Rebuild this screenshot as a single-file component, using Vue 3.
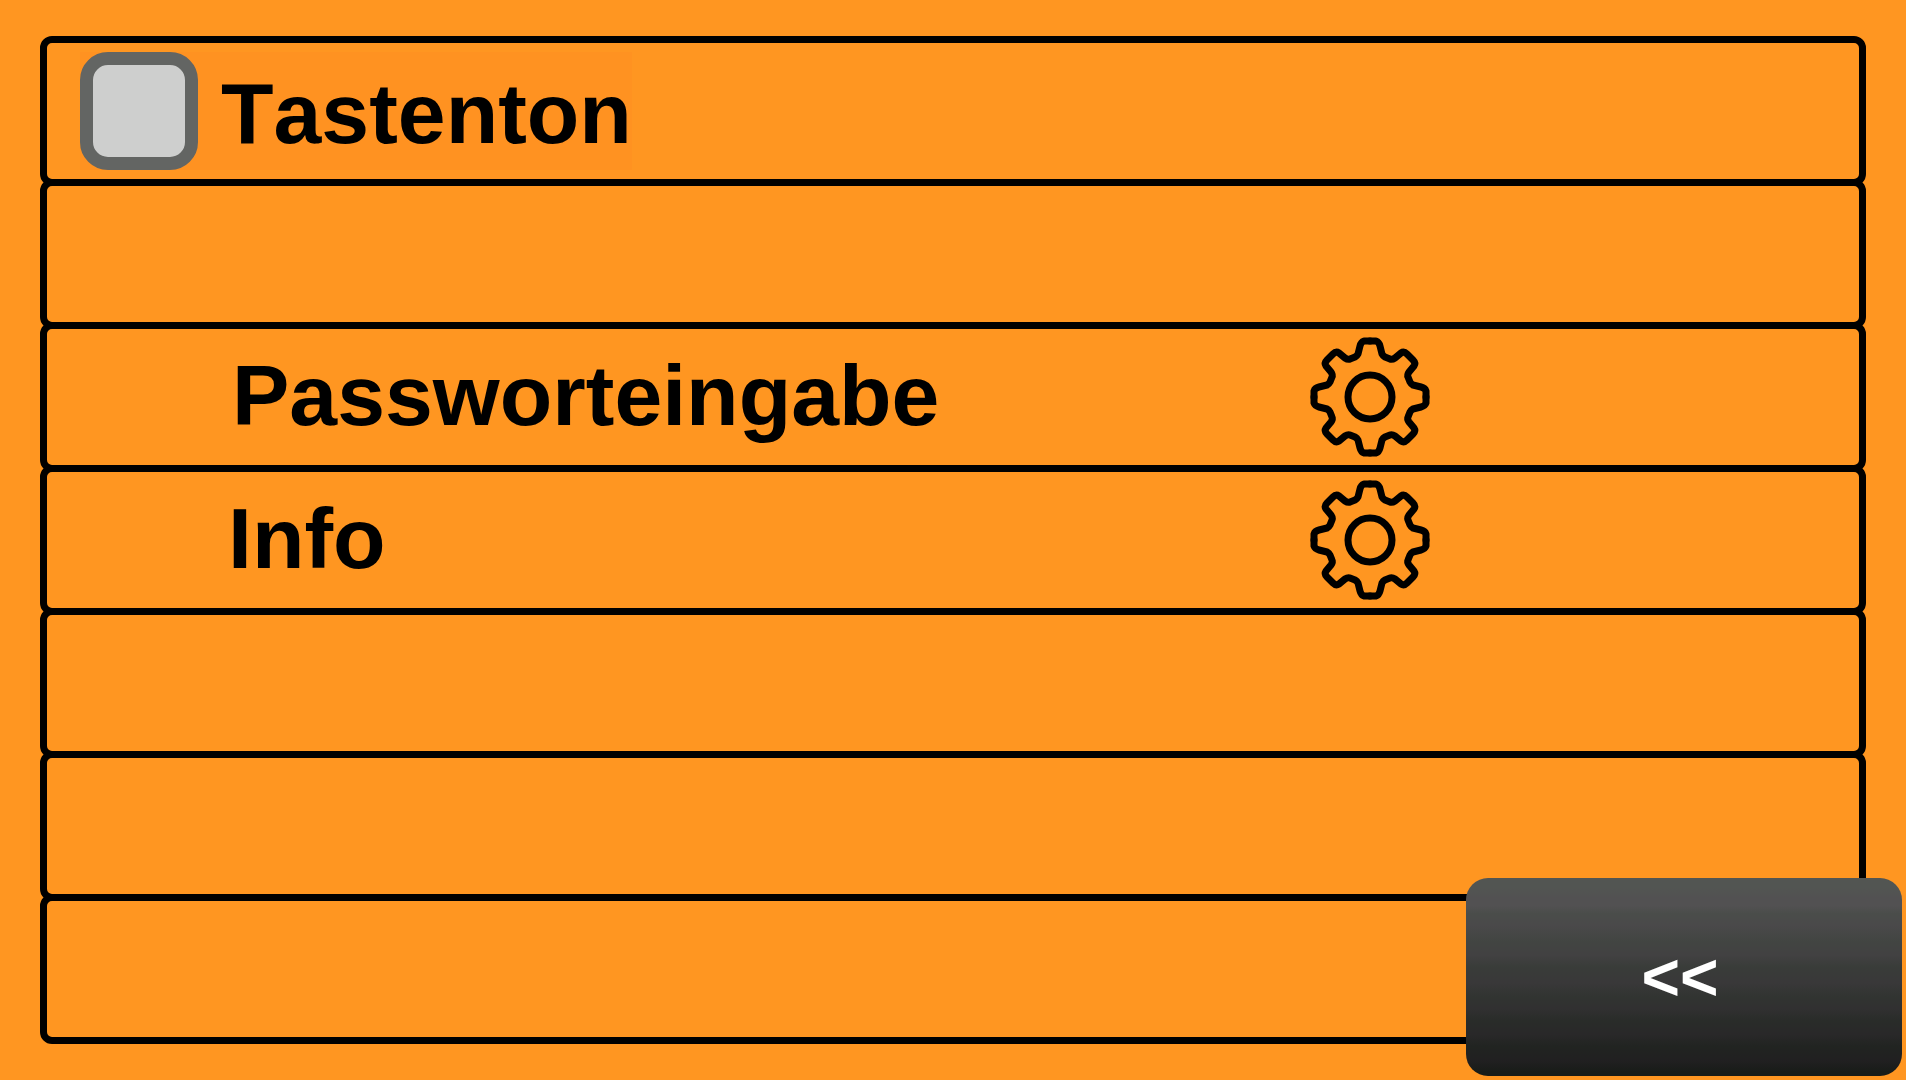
<script setup>
import { ref } from 'vue'

const keyTone = ref(false)

const rows = [
  { id: 'tone', type: 'toggle', label: 'Tastenton' },
  { id: 'empty-1', type: 'empty' },
  { id: 'password', type: 'link', label: 'Passworteingabe', wide: true },
  { id: 'info', type: 'link', label: 'Info' },
  { id: 'empty-2', type: 'empty' },
  { id: 'empty-3', type: 'empty' },
  { id: 'empty-4', type: 'empty' }
]

// One quarter of the gear outline, from the top tooth to the right tooth.
const gearQuarter =
  'M0,-56 L6,-56 Q9,-55 10,-51 L12,-43 Q13,-41 15,-40 L20,-38 Q22,-37 25,-39 L31,-44 Q34,-46 37,-43 L43,-37 Q46,-34 44,-31 L39,-25 Q37,-22 38,-20 L40,-15 Q41,-13 43,-12 L51,-10 Q55,-9 56,-6 L56,0'
</script>

<template>
  <main class="screen">
    <ul class="rows">
      <li v-for="row in rows" :key="row.id" class="row">
        <div v-if="row.type === 'toggle'" class="toggle">
          <input id="key-tone" v-model="keyTone" type="checkbox" class="box" />
          <label for="key-tone" class="label">{{ row.label }}</label>
        </div>
        <button
          v-else-if="row.type === 'link'"
          type="button"
          class="entry"
          :class="{ 'entry-wide': row.wide }"
        >
          <span class="label">{{ row.label }}</span>
          <svg class="gear" viewBox="-60 -60 120 120" aria-hidden="true">
            <path
              v-for="angle in [0, 90, 180, 270]"
              :key="angle"
              :d="gearQuarter"
              :transform="`rotate(${angle})`"
            />
            <circle r="22" />
          </svg>
        </button>
      </li>
    </ul>
    <button type="button" class="back">&lt;&lt;</button>
  </main>
</template>

<style>
body {
  margin: 0;
  background: #ff9621;
}
</style>

<style scoped>
.screen {
  position: relative;
  box-sizing: border-box;
  min-height: 100vh;
  padding: 36px 40px;
  background: #ff9621;
  color: #000;
  font-family: "Liberation Sans", Arial, sans-serif;
  font-weight: bold;
}

.rows {
  margin: 0;
  padding: 0;
  list-style: none;
}

.row {
  display: flex;
  align-items: center;
  box-sizing: border-box;
  height: 150px;
  border: 7px solid #000;
  border-radius: 12px;
}

.row + .row {
  margin-top: -7px;
}

.toggle {
  display: flex;
  align-items: center;
  gap: 23px;
  margin-left: 33px;
  background: #ff9221;
}

.box {
  appearance: none;
  box-sizing: border-box;
  width: 118px;
  height: 118px;
  margin: 0;
  border: 13px solid #636563;
  border-radius: 28px;
  background: #cecfce;
}

.box:checked {
  background: #636563;
}

.label {
  font-size: 86px;
  line-height: 96px;
  font-kerning: none;
}

.toggle .label {
  padding-top: 4px;
}

.entry {
  display: flex;
  flex: 1;
  align-items: center;
  justify-content: space-between;
  padding: 0 23.7% 0 181px;
  border: 0;
  background: none;
  color: inherit;
  font: inherit;
  text-align: left;
}

.entry-wide {
  padding-left: 185px;
}

.entry .label {
  padding-bottom: 4px;
}

.gear {
  width: 120px;
  height: 120px;
  fill: none;
  stroke: #000;
  stroke-width: 7;
  stroke-linecap: round;
  stroke-linejoin: round;
}

.back {
  position: absolute;
  right: 4px;
  bottom: 4px;
  width: 436px;
  height: 198px;
  padding: 0 8px 0 0;
  border: 0;
  border-radius: 22px;
  background: linear-gradient(
    #525552 0%,
    #525552 5%,
    #525152 10%,
    #525152 14%,
    #4a4d4a 18%,
    #4a494a 24%,
    #424542 32%,
    #424142 39%,
    #393c39 45%,
    #393839 53%,
    #313431 60%,
    #313031 66%,
    #292c29 72%,
    #292829 79%,
    #212421 85%,
    #212021 92%,
    #181c18 98%
  );
  color: #fff;
  font-family: inherit;
  font-size: 66px;
  font-weight: bold;
}
</style>
